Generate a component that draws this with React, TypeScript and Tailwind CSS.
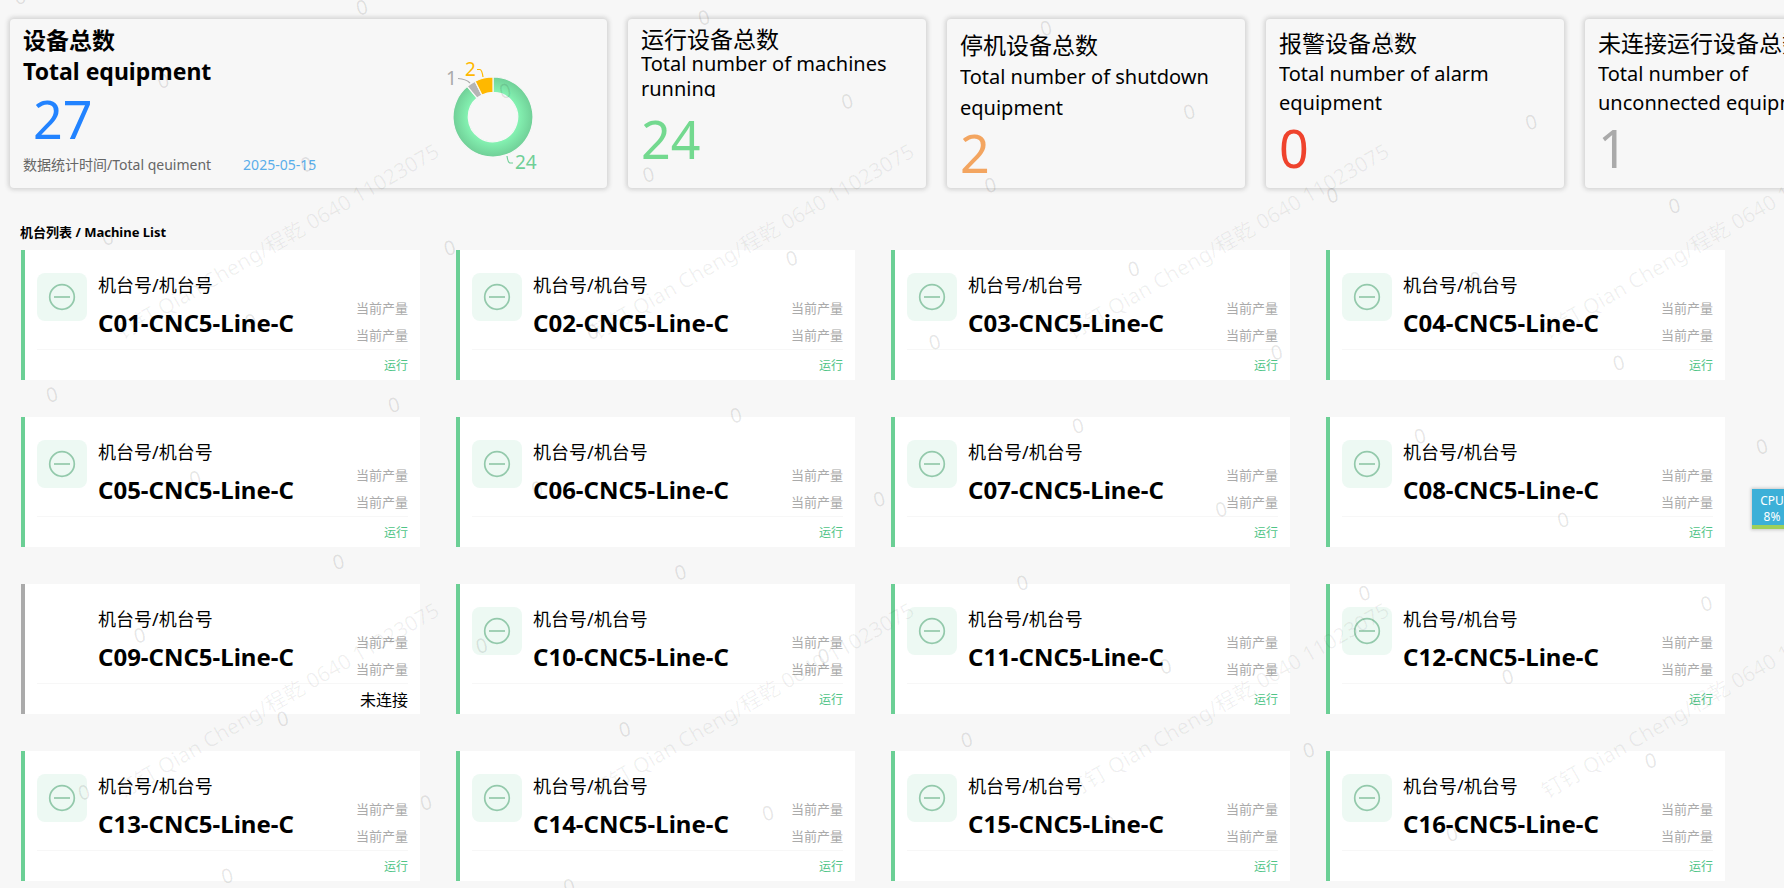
import cn from "clsx";

interface IStatCard {
  title: string;
  label: string;
  value: number;
  cardClass: string;
  titleClass: string;
  labelClass: string;
  valueClass: string;
}

const statCards: IStatCard[] = [
  {
    title: "运行设备总数",
    label: "Total number of machines running",
    value: 24,
    cardClass: "pt-2",
    titleClass: "leading-6",
    labelClass: "leading-[25px] h-[46px]",
    valueClass: "text-[#73d98f] mt-3",
  },
  {
    title: "停机设备总数",
    label: "Total number of shutdown equipment",
    value: 2,
    cardClass: "pt-2.5",
    titleClass: "leading-8",
    labelClass: "leading-[31px]",
    valueClass: "text-[#f3a560]",
  },
  {
    title: "报警设备总数",
    label: "Total number of alarm equipment",
    value: 0,
    cardClass: "pt-2",
    titleClass: "leading-8",
    labelClass: "leading-[29px]",
    valueClass: "text-[#ef432d] mt-px",
  },
  {
    title: "未连接运行设备总数",
    label: "Total number of unconnected equipment",
    value: 1,
    cardClass: "pt-2",
    titleClass: "leading-8",
    labelClass: "leading-[29px]",
    valueClass: "text-[#aaaaaa] mt-px",
  },
];

const machines = Array.from({ length: 16 }, (_, i) => ({
  name: `C${String(i + 1).padStart(2, "0")}-CNC5-Line-C`,
  connected: i !== 8,
}));

const EquipmentChart = () => (
  <svg width="120" height="130" viewBox="0 0 120 130" role="img">
    <defs>
      <radialGradient id="ring" gradientUnits="userSpaceOnUse" cx="60" cy="70" r="40">
        <stop offset="0.6" stopColor="#86f5b4" />
        <stop offset="1" stopColor="#70cf97" />
      </radialGradient>
    </defs>
    <g stroke="#f7f7f7" strokeWidth="1.2">
      <path d="M60 30A40 40 0 1 1 34.29 39.36L44.12 51.08A24.7 24.7 0 1 0 60 45.3Z" fill="url(#ring)" />
      <path d="M34.29 39.36A40 40 0 0 1 42.08 34.24L48.94 47.92A24.7 24.7 0 0 0 44.12 51.08Z" fill="#b5b5b5" />
      <path d="M42.08 34.24A40 40 0 0 1 60 30V45.3A24.7 24.7 0 0 0 48.94 47.92Z" fill="#ffb800" />
    </g>
    <g fill="none" strokeWidth="1.2">
      <path d="M25 31.5Q33 32 37 36" stroke="#aaaaaa" />
      <path d="M44 22.5H47Q49 23 50 30" stroke="#ffb800" />
      <path d="M74 109Q75 116 77 116H80" stroke="#70cf97" />
    </g>
    <g fontSize="19">
      <text x="13" y="38" fill="#aaaaaa">1</text>
      <text x="32" y="29" fill="#ffb800">2</text>
      <text x="82" y="122" fill="#70cf97">24</text>
    </g>
  </svg>
);

const MachineCard = ({ name, connected }: { name: string; connected: boolean }) => (
  <li
    className={cn("flex flex-col h-[130px] bg-white border-l-4 px-3", {
      "border-[#6bcf95]": connected,
      "border-[#aaaaaa]": !connected,
    })}
  >
    <div className="flex h-[101px] border-b border-[#f7f7f7]">
      <div className="w-[50px] pt-[23px]">
        {connected && (
          <div className="h-12 rounded-lg bg-[#edf9f3] flex items-center justify-center">
            <svg width="28" height="28" viewBox="0 0 28 28" fill="none" stroke="#93c9ab" strokeWidth="1.7">
              <circle cx="14" cy="14" r="12.3" />
              <path d="M6 14H22" />
            </svg>
          </div>
        )}
      </div>
      <div className="pl-[11px] pt-[23px]">
        <p className="text-lg leading-6">机台号/机台号</p>
        <h3 className="mt-2.5 text-2xl leading-8 font-bold whitespace-nowrap">{name}</h3>
      </div>
      <div className="ml-auto pt-[45px] text-[13px] leading-[27px] text-[#aaaaaa]">
        <p>当前产量</p>
        <p>当前产量</p>
      </div>
    </div>
    <p
      className={cn("text-right leading-8", {
        "text-xs text-[#4fc486]": connected,
        "text-base": !connected,
      })}
    >
      {connected ? "运行" : "未连接"}
    </p>
  </li>
);

const Watermark = () => (
  <svg className="absolute inset-0 w-full h-full pointer-events-none" aria-hidden="true">
    <g fill="#000000" fillOpacity="0.06" fontSize="21">
      {[340, 799].map((y) =>
        [122, 597, 1072, 1547].map((x) => (
          <text key={`${x}-${y}`} transform={`translate(${x} ${y}) rotate(-30)`}>
            钉钉 Qian Cheng/程乾 0640 11023075
          </text>
        ))
      )}
    </g>
    <g fill="#000000" fillOpacity="0.1" fontSize="20" textAnchor="middle">
      {Array.from({ length: 14 }, (_, m) =>
        Array.from({ length: 16 }, (_, k) => {
          const n = k - 8;
          const x = 20 + m * 143.2 - n * 55.6;
          const y = m * 83.7 + n * 157 - 3;
          if (x < 0 || x > 1800 || y < -10 || y > 900) return null;
          return (
            <text key={`${m}-${n}`} transform={`translate(${x} ${y}) rotate(-15)`} y="7">
              0
            </text>
          );
        })
      )}
    </g>
  </svg>
);

const App = () => {
  return (
    <main className="relative min-h-screen overflow-hidden bg-[#f7f7f7] text-black font-['Noto_Sans','Noto_Sans_CJK_SC',sans-serif]">
      <section className="flex gap-[21px] pl-[10px] pt-[19px]">
        <div className="flex shrink-0 w-[597px] h-[169px] rounded-sm pl-[13px] shadow-[0_0_4px_2px_#d4d4d4]">
          <div className="pt-1.5">
            <h1 className="text-[23px] leading-[31px] font-bold">
              设备总数
              <br />
              Total equipment
            </h1>
            <p className="pl-2.5 text-[52px] leading-[64px] text-[#2283ff]">27</p>
            <p className="flex gap-8 text-sm leading-7 text-[#666666]">
              数据统计时间/Total qeuiment
              <span className="text-[#5aaeea]">2025-05-15</span>
            </p>
          </div>
          <div className="ml-auto mr-[54px] pt-7">
            <EquipmentChart />
          </div>
        </div>
        {statCards.map(({ title, label, value, cardClass, titleClass, labelClass, valueClass }) => (
          <div
            key={title}
            className={cn(
              "shrink-0 w-[298px] h-[169px] rounded-sm px-[13px] shadow-[0_0_4px_2px_#d4d4d4]",
              cardClass
            )}
          >
            <h2 className={cn("text-[23px] whitespace-nowrap", titleClass)}>{title}</h2>
            <p className={cn("text-xl overflow-hidden", labelClass)}>{label}</p>
            <p className={cn("text-[52px] leading-[60px]", valueClass)}>{value}</p>
          </div>
        ))}
      </section>

      <section className="pl-5 pr-[59px] pt-8 pb-[7px]">
        <h2 className="text-[13px] leading-6 font-bold">机台列表 / Machine List</h2>
        <ul className="grid grid-cols-4 gap-x-9 gap-y-[37px] mt-[6px] pl-px">
          {machines.map((machine) => (
            <MachineCard key={machine.name} {...machine} />
          ))}
        </ul>
      </section>

      <aside className="absolute top-[489px] -right-2 w-10 bg-[#3cb0d8] border-b-4 border-[#9fd05a] pt-1 text-xs leading-4 text-white text-center shadow-[0_0_3px_1px_#c8c8c8]">
        <p>CPU</p>
        <p>8%</p>
      </aside>

      <Watermark />
    </main>
  );
};

export default App;
